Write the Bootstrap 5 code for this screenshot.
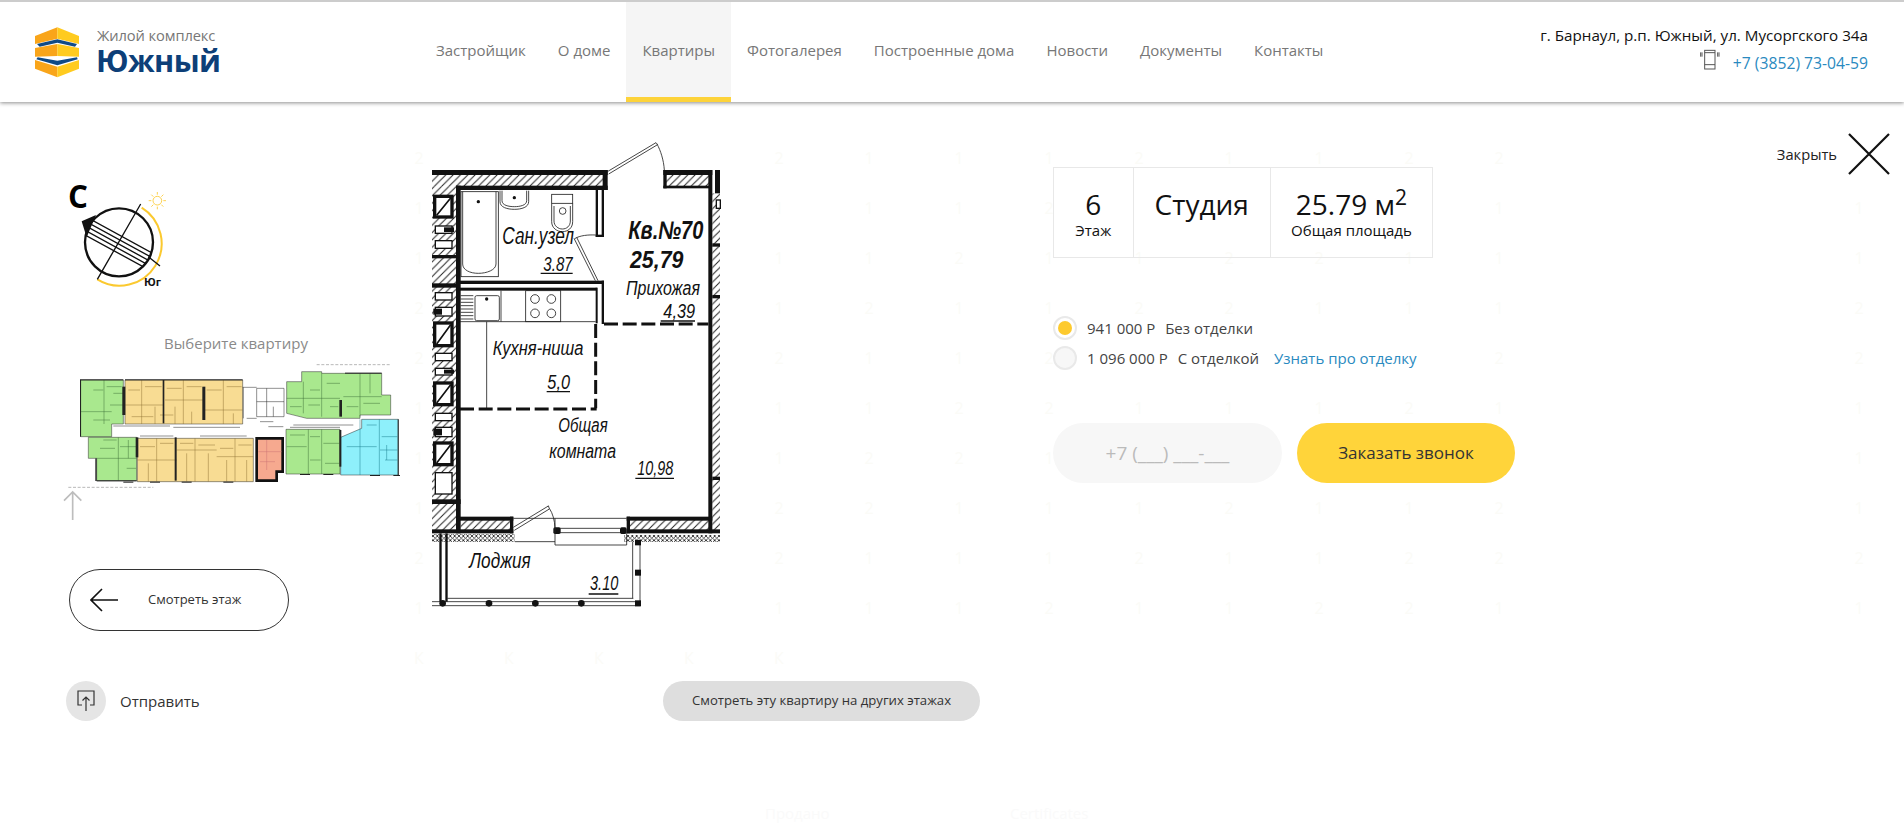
<!DOCTYPE html>
<html lang="ru">
<head>
  <meta charset="UTF-8" />
  <meta name="viewport" content="width=device-width, initial-scale=1.0"/>
  <title>ЖК Южный - Квартиры</title>
  <link href="https://cdn.jsdelivr.net/npm/bootstrap@5.3.3/dist/css/bootstrap.min.css" rel="stylesheet"/>
  <style>
    body { font-family: "Open Sans", "Liberation Sans", sans-serif; background: #fff; color: #333; overflow: hidden; }
    .site-head { height: 102px; border-top: 2px solid #ccc; background: #fff; box-shadow: 0 1px 4px rgba(0,0,0,.45); position: relative; z-index: 2; }
    .brand-box { width: 420px; padding-left: 35px; gap: 17px; }
    .brand-text { margin-top: -4px; }
    .brand-sub { font-size: 14.7px; line-height: 20px; color: #777; letter-spacing: -.1px; }
    .brand-name { font-size: 30.5px; line-height: 30px; font-weight: 700; color: #0d3f78; letter-spacing: -.6px; margin-left: -1px; }
    .navbar-expand .navbar-nav .head-link.nav-link { height: 100px; padding: 0 16px 3px; display: flex; align-items: center; font-size: 15px; color: #777; }
    .navbar-expand .navbar-nav .head-link.active { background: #f5f5f5; box-shadow: inset 0 -5px 0 #fdd33a; }
    .head-contacts { padding-right: 36px; margin-top: -7px; font-size: 15.2px; color: #111; text-align: right; line-height: 20px; }
    .head-phone { color: #2a8abf; text-decoration: none; font-size: 15.7px; }
    .phone-pic { margin: -6px 5px 0 0; }
    .page-body { position: relative; height: 729px; padding: 1px 14px 0 66px; }
    .ghost-layer { position: absolute; left: 374px; top: 31px; display: grid; grid-template-columns: repeat(17, 90px); grid-auto-rows: 50px; z-index: 0; font-size: 16px; color: #fbfbf7; text-align: center; line-height: 50px; }
    .ghost-word { position: absolute; top: 700px; font-size: 15px; color: #fafafa; }
    .left-col { width: 354px; flex: none; position: relative; z-index: 1; }
    .plan-col { width: 633px; flex: none; position: relative; z-index: 1; }
    .info-col { position: relative; z-index: 1; }
    .compass-pic { display: block; width: 110px; height: 117px; margin-top: 70px; }
    .pick-label { width: 340px; margin-top: 42px; font-size: 15px; line-height: 22px; color: #8a8a8a; text-align: center; }
    .floor-pic { display: block; width: 350px; height: 170px; margin-left: -6px; }
    .floor-btn { width: 220px; height: 62px; margin: 45px 0 0 3px; padding: 0 0 0 20px; border: 1px solid #333; border-radius: 31px; background: transparent; font-size: 13px; color: #333; gap: 30px; }
    .send-row { margin-top: 50px; font-size: 15px; color: #333; gap: 14px; }
    .send-dot { width: 40px; height: 40px; background: #e5e5e5; }
    .apt-pic { display: block; width: 320px; height: 500px; margin-top: 17px; }
    .other-btn { display: block; width: 317px; height: 40px; margin: 61px 0 0 243px; padding: 0; border: 0; border-radius: 20px; background: #dedede; font-size: 13.15px; color: #333; }
    .facts-box { width: 380px; height: 91px; margin-top: 64px; border: 1px solid #e8e8e8; color: #111; text-align: center; }
    .fact-cell { padding-top: 20px; border-right: 1px solid #e8e8e8; }
    .fact-cell:last-child { border-right: 0; }
    .fact-num { font-size: 28px; line-height: 32px; }
    .fact-cap { font-size: 15px; line-height: 20px; }
    .price-list { margin-top: 58px; gap: 6px; font-size: 15px; color: #444; }
    .price-row { height: 24px; gap: 10px; }
    .price-dot { width: 24px; height: 24px; border: 2px solid #e9e9e9; background: #f7f7f7; }
    .price-dot.picked { background: #fff; }
    .price-dot.picked::after { content: ""; width: 14px; height: 14px; border-radius: 50%; background: #fdca2e; }
    .price-note { margin-left: 6px; }
    .price-link { color: #2a8abf; text-decoration: none; margin-left: 5px; }
    .call-form { margin-top: 53px; gap: 15px; }
    .phone-field.form-control { width: 229px; height: 60px; border: 0; border-radius: 30px; background: #f7f7f7; text-align: center; font-size: 19px; color: #777; }
    .phone-field::placeholder { color: #bbb; opacity: 1; }
    .call-btn.btn { width: 218px; height: 60px; border: 0; border-radius: 30px; background: #ffd43a; font-size: 17px; color: #333; }
    .close-box { margin-top: 30px; gap: 11px; font-size: 14.7px; color: #222; height: 42px; position: relative; z-index: 1; }
  </style>
</head>
<body>
  <header class="site-head d-flex align-items-center">
    <a href="#" class="brand-box d-flex align-items-center text-decoration-none">
      <svg width="45" height="51" viewBox="30 21 135 153">
        <path d="M30 48 97 22V56L30 72Z" fill="#f9a51a"/>
        <path d="M97 22 162 48V72L97 56Z" fill="#ffcb1f"/>
        <path d="M36 72 97 58 156 72 150 80 97 68 44 80Z" fill="#0f4a86"/>
        <path d="M30 84 97 72V108L30 110Z" fill="#f9a51a"/>
        <path d="M97 72 162 84V110L97 108Z" fill="#ffcb1f"/>
        <path d="M38 112 97 122 156 112 158 118 97 136 34 118Z" fill="#0f4a86"/>
        <path d="M30 120 97 140V172L30 146Z" fill="#f9a51a"/>
        <path d="M97 140 162 120V146L97 172Z" fill="#ffcb1f"/>
      </svg>
      <div class="brand-text">
        <div class="brand-sub">Жилой комплекс</div>
        <div class="brand-name">Южный</div>
      </div>
    </a>
    <nav class="navbar navbar-expand p-0">
      <ul class="navbar-nav">
        <li class="nav-item"><a class="nav-link head-link" href="#">Застройщик</a></li>
        <li class="nav-item"><a class="nav-link head-link" href="#">О доме</a></li>
        <li class="nav-item"><a class="nav-link head-link active" href="#">Квартиры</a></li>
        <li class="nav-item"><a class="nav-link head-link" href="#">Фотогалерея</a></li>
        <li class="nav-item"><a class="nav-link head-link" href="#">Построенные дома</a></li>
        <li class="nav-item"><a class="nav-link head-link" href="#">Новости</a></li>
        <li class="nav-item"><a class="nav-link head-link" href="#">Документы</a></li>
        <li class="nav-item"><a class="nav-link head-link" href="#">Контакты</a></li>
      </ul>
    </nav>
    <div class="head-contacts ms-auto">
      <div class="mb-2">г. Барнаул, р.п. Южный, ул. Мусоргского 34а</div>
      <div class="d-flex justify-content-end align-items-center gap-2">
        <svg class="phone-pic" width="20" height="21" viewBox="27 15 60 63" fill="none" stroke="#555" stroke-width="3">
          <rect x="41" y="19" width="31" height="56"/>
          <path d="M41 26H72M41 62H72M29 25V38M33 25V38M80 25V38M84 25V38"/>
        </svg>
        <a class="head-phone" href="#">+7 (3852) 73-04-59</a>
      </div>
    </div>
  </header>

  <main class="page-body d-flex">
    <div class="ghost-layer" id="ghostLayer" aria-hidden="true"></div>
    <span class="ghost-word" style="left:765px" aria-hidden="true">Продано</span>
    <span class="ghost-word" style="left:1010px" aria-hidden="true">Certificates</span>

    <div class="left-col">
      <svg class="compass-pic" viewBox="78 39 330 351">
        <defs><clipPath id="roundClip"><circle cx="237" cy="247" r="102"/></clipPath></defs>
        <text x="84" y="143" font-family="Open Sans" font-weight="700" font-size="94" fill="#000">С</text>
        <path d="M305 143A122 122 0 1 1 172 358" fill="none" stroke="#fbc92f" stroke-width="6"/>
        <circle cx="237" cy="247" r="102" fill="#fff" stroke="#111" stroke-width="7"/>
        <path d="M125 184 168 165 140 232Z" fill="#111"/>
        <g clip-path="url(#roundClip)" stroke="#111" stroke-width="4">
          <path d="M130 166 340 281M130 180 340 295M130 194 340 309M130 208 340 323M130 222 340 337"/>
        </g>
        <path d="M302 132 172 358M325 290 360 318" stroke="#111" stroke-width="4"/>
        <g fill="none" stroke="#fbc92f" stroke-width="2.5">
          <circle cx="352" cy="122" r="13"/>
          <path d="M352 96V104M352 140V148M326 122H334M370 122H378M334 104 340 110M364 134 370 140M370 104 364 110M340 134 334 140"/>
        </g>
        <text x="312" y="378" font-family="Open Sans" font-weight="700" font-size="33" fill="#111">Юг</text>
      </svg>
      <div class="pick-label">Выберите квартиру</div>
      <svg class="floor-pic" viewBox="0 12 1050 510">
        <g stroke="#2c2c2c" stroke-width="1.5">
          <path d="M62 90H190V222H155V260H62Z" fill="#a9e88e"/>
          <path d="M195 90H548V222H195Z" fill="#f8dc93"/>
          <path d="M85 262H230V392H110V325H85Z" fill="#a9e88e"/>
          <path d="M232 265H580V395H232Z" fill="#f8dc93"/>
          <path d="M678 238H840V372H678Z" fill="#a9e88e"/>
          <path d="M905 208H1015V375H842V262L905 235Z" fill="#8ef0fb"/>
          <path d="M680 95H725V65H785V70H965V135H992V195H900V205H740L680 190Z" fill="#a9e88e"/>
        </g>
        <path d="M590 265H668V365H650V392H590Z" fill="#f6a98f" stroke="#111" stroke-width="8"/>
        <path d="M595 305H665M620 270V360M600 335H645" fill="none" stroke="#c77" stroke-width="1.5"/>
        <g fill="none" stroke="#3a6b35" stroke-width="1.4">
          <path d="M132 90V222M62 185H155M150 165H190M160 130H190M100 120H130M140 110H185M100 210H150"/>
          <path d="M175 262V392M110 325H230M130 270H170M120 295H165M180 290H228M205 270V325M200 355H228"/>
          <path d="M745 238V372M785 238V372M680 290H740M750 260H780M790 280H838M690 255H735M795 340H838M750 330H782"/>
          <path d="M680 145H840M730 95V190M785 70V200M900 70V200M850 140H965M750 120H780M800 100H840M690 170H725M860 170H895M910 160H960M930 70V130M745 165H780M810 170H835"/>
        </g>
        <g fill="none" stroke="#8a6f30" stroke-width="1.4">
          <path d="M245 90V222M370 90V222M490 90V222M195 165H310M315 150H430M430 180H548M205 120H240M255 110H305M320 115H365M380 110H425M440 120H485M500 110H545M285 170V222M345 170V222M395 185V222M520 190V222M215 200H280M300 195H340"/>
          <path d="M290 265V395M405 265V395M525 265V395M232 330H350M350 300H470M470 320H580M240 290H285M300 280H340M360 280H400M415 285H465M480 295H520M535 285H575M265 340V395M380 310V395M445 310V395M500 330V395M560 330V395"/>
        </g>
        <path d="M900 208V375M958 208V375M860 290H950M965 260H1012M960 300H1012M980 285V330M975 330H1012M920 225H950" fill="none" stroke="#1a7f8c" stroke-width="1.5"/>
        <g fill="#222">
          <rect x="187" y="110" width="9" height="85"/><rect x="308" y="90" width="5" height="130"/><rect x="427" y="110" width="9" height="100"/>
          <rect x="227" y="262" width="8" height="60"/><rect x="344" y="262" width="6" height="130"/><rect x="838" y="150" width="8" height="50"/><rect x="838" y="240" width="6" height="110"/>
          <rect x="62" y="88" width="128" height="3"/><rect x="195" y="88" width="353" height="3"/><rect x="60" y="88" width="3" height="172"/>
          <rect x="106" y="325" width="4" height="68"/><rect x="110" y="391" width="120" height="3"/>
          <rect x="190" y="395" width="30" height="3"/><rect x="270" y="395" width="30" height="3"/><rect x="365" y="395" width="30" height="3"/><rect x="490" y="395" width="30" height="3"/><rect x="720" y="372" width="30" height="3"/><rect x="790" y="372" width="30" height="3"/><rect x="930" y="375" width="30" height="3"/><rect x="1000" y="375" width="20" height="3"/>
          <rect x="1013" y="208" width="3" height="168"/><rect x="855" y="68" width="110" height="3"/>
        </g>
        <g fill="none" stroke="#222" stroke-width="1.5">
          <path d="M548 112H590M590 115H672V200H590ZM590 155H672M620 115V200M640 170V200M550 112V205M600 215H640M625 230H670"/>
          <path d="M160 228H330M340 232H540M240 258H340M420 258H560M700 225H880M690 232H840M560 205H590"/>
        </g>
        <path d="M770 44H990M25 412H280" stroke="#aaa" stroke-width="2.5" stroke-dasharray="9 5"/>
        <path d="M38 510V428M12 452 38 426 64 452" fill="none" stroke="#bdbdbd" stroke-width="5"/>
      </svg>
      <button type="button" class="floor-btn d-flex align-items-center">
        <svg width="28" height="24" viewBox="0 0 28 24" fill="none" stroke="#111" stroke-width="1.6"><path d="M28 12H1M12 1 1 12 12 23"/></svg>
        Смотреть этаж
      </button>
      <div class="send-row d-flex align-items-center">
        <span class="send-dot rounded-circle d-flex align-items-center justify-content-center">
          <svg width="18" height="22" viewBox="0 0 18 22" fill="none" stroke="#333" stroke-width="1.2"><path d="M5 15H1V1H17V15H13M9 21V7M5.5 10.5 9 7 12.5 10.5"/></svg>
        </span>
        Отправить
      </div>
    </div>

    <div class="plan-col">
      <svg class="apt-pic" viewBox="0 0 960 1500">
        <defs>
          <pattern id="hatchLine" width="22" height="22" patternUnits="userSpaceOnUse"><path d="M-4 26 26 -4M-4 4 4 -4M18 26 26 18" stroke="#222" stroke-width="3"/></pattern>
          <pattern id="crossLine" width="13" height="13" patternUnits="userSpaceOnUse"><path d="M0 13 13 0M0 0 13 13" stroke="#222" stroke-width="2.5"/></pattern>
        </defs>
        <!-- hatched wall fill -->
        <g fill="url(#hatchLine)">
          <rect x="36" y="165" width="520" height="35"/>
          <rect x="738" y="165" width="130" height="35"/>
          <rect x="36" y="200" width="72" height="1035"/>
          <rect x="877" y="220" width="23" height="1010"/>
          <rect x="122" y="1200" width="150" height="30"/>
          <rect x="628" y="1200" width="240" height="30"/>
        </g>
        <g fill="url(#crossLine)">
          <rect x="36" y="1242" width="248" height="24"/>
          <rect x="612" y="1245" width="288" height="21"/>
        </g>
        <!-- walls -->
        <g fill="#111">
          <rect x="36" y="150" width="527" height="15"/>
          <rect x="108" y="197" width="455" height="13"/>
          <rect x="548" y="150" width="15" height="60"/>
          <rect x="730" y="150" width="147" height="15"/>
          <rect x="730" y="150" width="10" height="55"/>
          <rect x="730" y="197" width="138" height="8"/>
          <rect x="865" y="150" width="12" height="1090"/>
          <rect x="885" y="150" width="15" height="70"/>
          <rect x="877" y="370" width="23" height="10"/>
          <rect x="877" y="525" width="23" height="10"/>
          <rect x="877" y="1070" width="23" height="10"/>
          <rect x="108" y="197" width="14" height="1043"/>
          <rect x="527" y="205" width="7" height="145"/>
          <rect x="545" y="205" width="7" height="145"/>
          <rect x="527" y="344" width="25" height="7"/>
          <rect x="120" y="482" width="432" height="10"/>
          <rect x="120" y="503" width="410" height="9"/>
          <rect x="527" y="503" width="6" height="107"/>
          <rect x="545" y="482" width="7" height="130"/>
          <rect x="36" y="405" width="72" height="10"/>
          <rect x="36" y="490" width="72" height="13"/>
          <rect x="36" y="1138" width="86" height="14"/>
          <rect x="108" y="1190" width="172" height="12"/>
          <rect x="270" y="1190" width="10" height="50"/>
          <rect x="36" y="1228" width="244" height="12"/>
          <rect x="620" y="1190" width="257" height="12"/>
          <rect x="620" y="1190" width="10" height="50"/>
          <rect x="620" y="1228" width="280" height="12"/>
          <rect x="400" y="1222" width="22" height="20" rx="5"/>
          <rect x="600" y="1222" width="20" height="20" rx="5"/>
        </g>
        <!-- vent shafts -->
        <g fill="#fff" stroke="#111" stroke-width="10">
          <rect x="44" y="229" width="52" height="62"/>
          <rect x="44" y="609" width="52" height="68"/>
          <rect x="44" y="789" width="52" height="65"/>
          <rect x="44" y="969" width="52" height="65"/>
        </g>
        <g stroke="#111" stroke-width="5">
          <path d="M50 286 92 234M50 672 92 614M50 849 92 794M50 1029 92 974"/>
        </g>
        <g fill="#fff" stroke="#111" stroke-width="4">
          <rect x="46" y="318" width="50" height="22"/><rect x="46" y="362" width="50" height="23"/>
          <rect x="46" y="518" width="50" height="22"/><rect x="46" y="562" width="50" height="26"/>
          <rect x="46" y="700" width="50" height="22"/><rect x="46" y="745" width="50" height="20"/>
          <rect x="46" y="880" width="50" height="22"/><rect x="46" y="922" width="50" height="28"/>
          <rect x="46" y="1058" width="50" height="64"/>
          <rect x="889" y="240" width="12" height="25"/>
        </g>
        <g fill="#111"><rect x="72" y="322" width="30" height="14"/><rect x="40" y="566" width="26" height="18"/><rect x="72" y="749" width="30" height="12"/><rect x="40" y="926" width="26" height="20"/></g>
        <!-- doors and thin lines -->
        <g fill="none" stroke="#222" stroke-width="2.5">
          <path d="M562 155 708 68M566 162 711 75M708 68 713 74M711 72C722 92 731 120 733 150"/>
          <path d="M462 355 526 482M470 352 534 482M464 356C480 346 505 344 527 345"/>
          <path d="M280 1222 385 1158M283 1231 388 1167M385 1157 388 1166M388 1165C398 1180 404 1200 405 1225"/>
          <path d="M280 1195H620M405 1195V1275H620V1240M285 1265H405M420 1225H600M420 1238H600"/>
          <rect x="123" y="215" width="112" height="255"/>
          <path d="M128 215V432C128 450 150 460 175 460 200 460 228 450 228 432V215"/>
          <path d="M240 212V245C240 262 262 268 283 268 304 268 326 262 326 245V212M246 212V242C246 256 266 260 283 260 300 260 320 256 320 242V212"/>
          <rect x="395" y="223" width="63" height="27"/>
          <path d="M395 250V305C395 325 412 335 427 335 443 335 458 325 458 305V250M402 258V303C402 318 415 327 427 327 440 327 451 318 451 303V258"/>
          <circle cx="428" cy="273" r="10"/>
          <rect x="165" y="527" width="73" height="75" rx="5"/>
          <path d="M122 527H160M122 537H160M122 547H160M122 557H160M122 567H160M122 577H160M122 587H160M122 597H160M243 512V605"/>
          <rect x="317" y="512" width="105" height="93"/>
          <circle cx="345" cy="537" r="13"/><circle cx="394" cy="537" r="13"/><circle cx="345" cy="580" r="13"/><circle cx="394" cy="580" r="13"/>
          <path d="M120 605H527M200 605V865"/>
          <path d="M82 1435H640M36 1445H660M36 1457H660M638 1265V1435M660 1265V1457"/>
        </g>
        <g fill="#111">
          <circle cx="175" cy="245" r="5"/><circle cx="283" cy="233" r="5"/><circle cx="200" cy="537" r="5"/>
          <rect x="58" y="1240" width="7" height="205"/><rect x="76" y="1240" width="7" height="205"/>
          <circle cx="68" cy="1450" r="10"/><circle cx="207" cy="1450" r="10"/><circle cx="346" cy="1450" r="10"/><circle cx="484" cy="1450" r="10"/>
          <rect x="645" y="1441" width="18" height="18"/><rect x="645" y="1349" width="18" height="18"/><rect x="645" y="1260" width="18" height="16"/>
        </g>
        <path d="M552 612H865M527 612V865M120 867H530" fill="none" stroke="#111" stroke-width="9" stroke-dasharray="42 14"/>
        <!-- labels -->
        <g font-family="Liberation Sans" font-style="italic" fill="#111">
          <text x="247" y="372" textLength="215" lengthAdjust="spacingAndGlyphs" font-size="74">Сан.узел</text>
          <text x="370" y="452" textLength="88" lengthAdjust="spacingAndGlyphs" font-size="62">3.87</text>
          <text x="625" y="358" textLength="225" lengthAdjust="spacingAndGlyphs" font-weight="700" font-size="76">Кв.№70</text>
          <text x="630" y="445" textLength="160" lengthAdjust="spacingAndGlyphs" font-weight="700" font-size="72">25,79</text>
          <text x="618" y="525" textLength="222" lengthAdjust="spacingAndGlyphs" font-size="58">Прихожая</text>
          <text x="730" y="593" textLength="95" lengthAdjust="spacingAndGlyphs" font-size="62">4,39</text>
          <text x="218" y="705" textLength="272" lengthAdjust="spacingAndGlyphs" font-size="60">Кухня-ниша</text>
          <text x="382" y="806" textLength="68" lengthAdjust="spacingAndGlyphs" font-size="62">5,0</text>
          <text x="415" y="935" textLength="148" lengthAdjust="spacingAndGlyphs" font-size="60">Общая</text>
          <text x="388" y="1015" textLength="200" lengthAdjust="spacingAndGlyphs" font-size="60">комната</text>
          <text x="652" y="1065" textLength="108" lengthAdjust="spacingAndGlyphs" font-size="62">10,98</text>
          <text x="148" y="1345" textLength="184" lengthAdjust="spacingAndGlyphs" font-size="66">Лоджия</text>
          <text x="510" y="1410" textLength="85" lengthAdjust="spacingAndGlyphs" font-size="62">3.10</text>
        </g>
        <path d="M362 460H458M722 603H825M380 815H450M646 1075H762M506 1422H595" stroke="#111" stroke-width="4"/>
      </svg>
      <button type="button" class="other-btn">Смотреть эту квартиру на других этажах</button>
    </div>

    <div class="info-col flex-fill">
      <div class="facts-box d-flex">
        <div class="fact-cell" style="width:80px"><div class="fact-num">6</div><div class="fact-cap">Этаж</div></div>
        <div class="fact-cell" style="width:138px"><div class="fact-num">Студия</div></div>
        <div class="fact-cell" style="width:162px"><div class="fact-num">25.79 м<sup>2</sup></div><div class="fact-cap">Общая площадь</div></div>
      </div>
      <div class="price-list d-flex flex-column">
        <div class="price-row d-flex align-items-center">
          <span class="price-dot picked rounded-circle d-flex align-items-center justify-content-center"></span>
          <span>941 000 Р <span class="price-note">Без отделки</span></span>
        </div>
        <div class="price-row d-flex align-items-center">
          <span class="price-dot rounded-circle"></span>
          <span>1 096 000 Р <span class="price-note">С отделкой</span></span>
          <a class="price-link" href="#">Узнать про отделку</a>
        </div>
      </div>
      <form class="call-form d-flex">
        <input class="form-control phone-field" type="text" placeholder="+7 (___) ___-___">
        <button type="button" class="btn call-btn">Заказать звонок</button>
      </form>
    </div>

    <div class="close-box d-flex align-items-center">
      <span>Закрыть</span>
      <svg width="42" height="42" viewBox="0 0 42 42" stroke="#111" stroke-width="2.2"><path d="M1 1 41 41M41 1 1 41"/></svg>
    </div>
  </main>

  <script>
    // faint numbers from the flat table behind the overlay
    let ghost = document.getElementById('ghostLayer');
    let digits = '21122111';
    let html = '';
    for (let r = 0; r < 10; r++) {
      for (let c = 0; c < 17; c++) {
        let shown = c <= 12 || c === 16;
        if (c >= 1 && c <= 3) shown = false;            // under the apartment plan
        if ((r === 1 || r === 4 || r === 6) && c >= 8 && c <= 11) shown = false; // under the form
        if (r === 0 && c === 16) shown = false;         // under the close cross
        html += '<span>' + (shown ? digits[(r + c) % digits.length] : '') + '</span>';
      }
    }
    for (let c = 0; c < 5; c++) html += '<span>К</span>';
    ghost.innerHTML = html;
  </script>
  <script src="https://cdn.jsdelivr.net/npm/bootstrap@5.3.3/dist/js/bootstrap.bundle.min.js"></script>
</body>
</html>
